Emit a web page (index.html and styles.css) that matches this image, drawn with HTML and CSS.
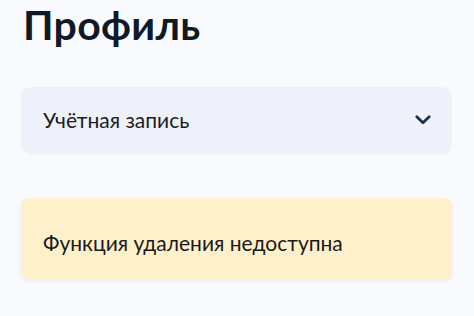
FILE: index.html
```html
<!DOCTYPE html>
<html lang="ru">
<head>
<meta charset="utf-8">
<link rel="stylesheet" href="styles.css">
</head>
<body>
<main class="page">
  <h1 class="title">Профиль</h1>
  <div class="select">
    <span class="select-label">Учётная запись</span>
    <svg class="chevron" width="16" height="10" viewBox="0 0 16 10" aria-hidden="true">
      <path d="M1.8 1.8 L8 7.8 L14.2 1.8" fill="none" stroke="#1d2f52" stroke-width="2.8" stroke-linecap="round" stroke-linejoin="round"/>
    </svg>
  </div>
  <div class="notice">
    <span class="notice-text">Функция удаления недоступна</span>
  </div>
</main>
</body>
</html>
```
FILE: styles.css
```css
html, body {
  margin: 0;
  padding: 0;
  background: #f9fafd;
}
body {
  width: 474px;
  height: 316px;
  overflow: hidden;
  font-family: Lato, "Noto Sans", "DejaVu Sans", sans-serif;
}
.page {
  padding: 1px 22px 0 21px;
  display: flex;
  flex-direction: column;
}
.title {
  margin: 0 0 0 2px;
  font-size: 41px;
  line-height: 48px;
  font-weight: 700;
  letter-spacing: 0.3px;
  color: #101a27;
}
.select {
  margin-top: 38px;
  height: 66px;
  box-sizing: border-box;
  padding: 0 21px 0 22px;
  display: flex;
  align-items: center;
  justify-content: space-between;
  background: #eef0fa;
  border-radius: 10px;
  box-shadow: 0 1px 2px rgba(60, 70, 120, 0.06);
}
.select-label {
  font-size: 21px;
  line-height: 24px;
  color: #1b1d24;
}
.chevron {
  display: block;
}
.notice {
  margin-top: 45px;
  height: 81px;
  box-sizing: border-box;
  padding: 31px 22px 0 22px;
  background: #fdf0cb;
  border-radius: 8px;
  box-shadow: 0 2px 4px rgba(60, 70, 120, 0.08);
}
.notice-text {
  font-size: 21px;
  line-height: 28px;
  color: #1a1a1a;
}
```
